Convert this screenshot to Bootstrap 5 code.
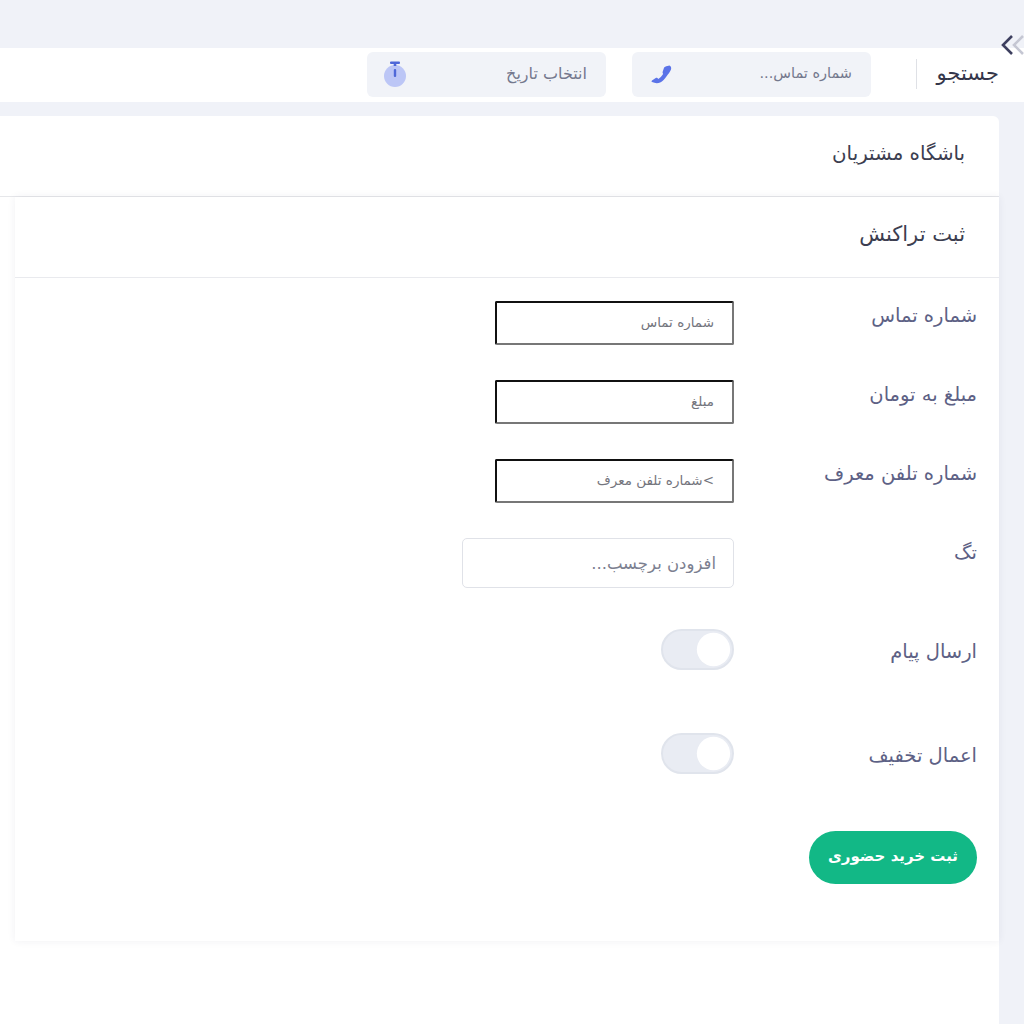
<!DOCTYPE html>
<html lang="fa" dir="rtl">
<head>
    <meta charset="UTF-8">
    <meta name="viewport" content="width=device-width, initial-scale=1.0">
    <title>ثبت تراکنش</title>
    <link href="https://cdn.jsdelivr.net/npm/bootstrap@5.3.0/dist/css/bootstrap.min.css" rel="stylesheet">
    <style>
        html, body { height: 100%; }
        body { background: #f0f2f8; font-family: "DejaVu Sans", sans-serif; overflow: hidden; padding-top: 48px; position: relative; }
        .search-bar { height: 54px; background: #fff; padding: 0 25px 2px 0; }
        .search-title { font-size: 21px; color: #34364a; width: 63px; white-space: nowrap; }
        .search-sep { width: 1px; height: 30px; background: #dfe1e6; margin: 0 19px 0 45px; }
        .search-box { width: 239px; height: 45px; background: #f1f3f8; border-radius: 6px; padding: 0 19px 0 17px; font-size: 14.5px; color: #74788d; }
        .search-box + .search-box { margin-right: 26px; font-size: 16px; }
        .collapse-arrows { position: absolute; top: 34px; left: 1001px; }
        .outer-panel { margin: 14px 25px 0 0; height: 908px; background: #fff; border-top-right-radius: 6px; }
        .outer-head { height: 81px; padding: 23px 34px 0 0; border-bottom: 1px solid #e6e7ea; font-size: 19.8px; color: #3c3e50; }
        .inner-panel { width: 984px; height: 744px; background: #fff; box-shadow: 0 0 8px rgba(40, 45, 80, .07); }
        .inner-head { height: 81px; padding: 22px 34px 0 0; border-bottom: 1px solid #e9eaee; font-size: 21px; color: #3c3e50; }
        .form-body { padding: 23px 22px 0 0; }
        .form-line { display: flex; height: 79px; }
        .form-line.tall { height: 91px; }
        .form-line.taller { height: 104px; }
        .form-line.last { height: 98px; }
        .line-label { width: 243px; font-size: 19.5px; color: #5d6185; }
        .plain-field { width: 239px; height: 44px; padding: 0 18px 3px; font-size: 13.5px; background: #fff; border: 2px solid; border-color: #111 #777 #777 #111; border-radius: 2px; color: #555; }
        .plain-field::placeholder { color: #74757d; }
        .tag-field { width: 272px; height: 50px; font-size: 16.5px; padding: 0 17px; border-color: #e0e2e8; border-radius: 5px; }
        .tag-field::placeholder { color: #7c8090; }
        .form-switch .switch-big { width: 73px; height: 41px; margin: 0; float: none; background-color: #e9ecf3; border: 2px solid #e0e4ec; background-position: right center; background-size: contain; --bs-form-switch-bg: url("data:image/svg+xml,%3csvg xmlns='http://www.w3.org/2000/svg' viewBox='-4 -4 8 8'%3e%3ccircle r='3.6' fill='%23fff'/%3e%3c/svg%3e"); }
        .save-btn { width: 168px; height: 53px; background: #12b886; color: #fff; border: 0; border-radius: 27px; font-size: 15px; font-weight: 700; white-space: nowrap; padding: 0 0 3px; }
    </style>
</head>
<body>
    <div class="search-bar d-flex align-items-center">
        <div class="search-title">جستجو</div>
        <div class="search-sep"></div>
        <div class="search-box d-flex align-items-center justify-content-between">
            <span>شماره تماس...</span>
            <svg width="24" height="24" viewBox="0 0 24 24"><path fill="#5b73e8" d="M20.500 3.500c1.600.9 2.100 2.400 1.400 4.300-.8 2.200-2.600 4-4.300 6.400-2 2.700-3.900 5.300-6.500 6.400-2.200.9-5 .9-8.100-.5-.6-.3-.6-1 0-1.500l3.700-2.700c.5-.4 1.200-.3 1.700.1l1 .9c1.500-.7 3.400-2.600 4.700-4.800-.5-.9-.6-1.500-.5-2l1.500-4.500c.2-.6 1.700-1.200 3.300-1.600z"/></svg>
        </div>
        <div class="search-box d-flex align-items-center justify-content-between">
            <span>انتخاب تاریخ</span>
            <svg width="24" height="28" viewBox="0 0 24 28"><circle cx="11" cy="16" r="11" fill="#bcc6f6"/><rect x="6" y="1.500" width="10" height="2.500" rx="1" fill="#4f68d8"/><rect x="9.700" y="3" width="2.600" height="3" fill="#4f68d8"/><rect x="9.800" y="9" width="2.400" height="8" rx="1" fill="#4f68d8"/></svg>
        </div>
    </div>
    <svg class="collapse-arrows" width="23" height="22" viewBox="0 0 23 22" fill="none" stroke-width="2.600"><path d="M11 2 2 11l9 9" stroke="#3d3f5f"/><path d="M22 2l-9 9 9 9" stroke="#c5c7d3"/></svg>

    <div class="outer-panel">
        <div class="outer-head">باشگاه مشتریان</div>
        <div class="inner-panel">
            <div class="inner-head">ثبت تراکنش</div>
            <div class="form-body">
                <div class="form-line">
                    <label class="line-label">شماره تماس</label>
                    <input class="plain-field" type="text" placeholder="شماره تماس">
                </div>
                <div class="form-line">
                    <label class="line-label">مبلغ به تومان</label>
                    <input class="plain-field" type="text" placeholder="مبلغ">
                </div>
                <div class="form-line">
                    <label class="line-label">شماره تلفن معرف</label>
                    <input class="plain-field" type="text" placeholder="&gt;شماره تلفن معرف">
                </div>
                <div class="form-line tall">
                    <label class="line-label">تگ</label>
                    <input class="form-control tag-field" type="text" placeholder="افزودن برچسب...">
                </div>
                <div class="form-line taller">
                    <label class="line-label pt-2">ارسال پیام</label>
                    <div class="form-check form-switch p-0 m-0">
                        <input class="form-check-input switch-big" type="checkbox" role="switch">
                    </div>
                </div>
                <div class="form-line last">
                    <label class="line-label pt-2">اعمال تخفیف</label>
                    <div class="form-check form-switch p-0 m-0">
                        <input class="form-check-input switch-big" type="checkbox" role="switch">
                    </div>
                </div>
                <button class="btn save-btn" type="button">ثبت خرید حضوری</button>
            </div>
        </div>
    </div>
</body>
</html>
